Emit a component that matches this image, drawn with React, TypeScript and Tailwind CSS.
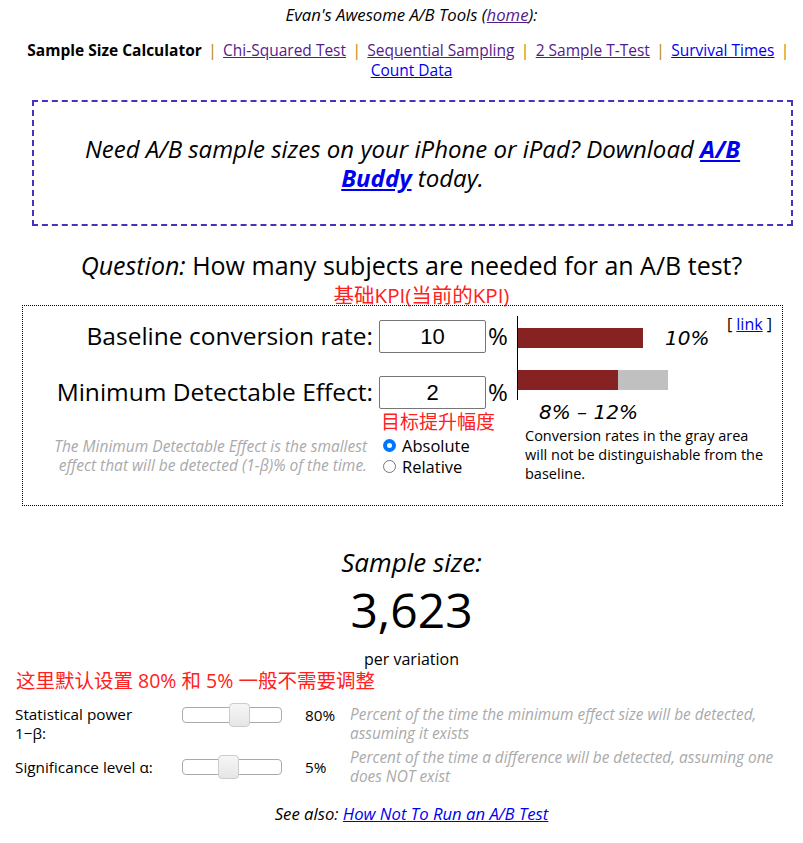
import React from "react";

const Sep = () => <span className="text-[#b8860b] mx-[6.4px]">|</span>;

function Slider({ thumb }: { thumb: number }) {
  return (
    <div className="relative w-[100px] h-[16px] rounded-[4px] border border-[#aaaaaa] bg-white">
      <div
        className="absolute top-[-5px] w-[21px] h-[24px] rounded-[4px] border border-[#cccccc] bg-gradient-to-b from-[#f6f6f6] to-[#e6e6e6]"
        style={{ left: thumb }}
      />
    </div>
  );
}

export default function App() {
  return (
    <div className="w-[803px] min-h-[843px] bg-white text-black font-['Open_Sans','Noto_Sans_CJK_SC',sans-serif]">
      <p className="pl-[20px] text-center italic text-[16.7px] pt-[5px] leading-[20px]">
        Evan's Awesome A/B Tools (<a href="#" className="underline text-[#551a8b]">home</a>):
      </p>
      <div className="pl-[20px] text-center text-[15.5px] leading-[20px] mt-[15px]">
        <div>
          <b>Sample Size Calculator</b>
          <Sep />
          <a href="#" className="underline text-[#551a8b]">Chi-Squared Test</a>
          <Sep />
          <a href="#" className="underline text-[#551a8b]">Sequential Sampling</a>
          <Sep />
          <a href="#" className="underline text-[#551a8b]">2 Sample T-Test</a>
          <Sep />
          <a href="#" className="underline text-[#0000ee]">Survival Times</a>
          <Sep />
        </div>
        <div>
          <a href="#" className="underline text-[#0000ee]">Count Data</a>
        </div>
      </div>

      <div className="ml-[32px] mt-[20px] w-[761px] h-[126px] border-2 border-dashed border-[#4a30c0] flex flex-col items-center justify-center px-[30px] italic text-[24px] leading-[29px]">
        <p className="text-center">
          Need A/B sample sizes on your iPhone or iPad? Download{" "}
          <a href="#" className="underline font-bold text-[#0000ee]">A/B</a>
        </p>
        <p className="text-center">
          <a href="#" className="underline font-bold text-[#0000ee]">Buddy</a> today.
        </p>
      </div>

      <p className="pl-[20px] text-center text-[25px] leading-[30px] mt-[24px]">
        <i>Question:</i> How many subjects are needed for an A/B test?
      </p>
      <p className="pl-[40px] text-center text-[20.5px] leading-[22px] text-[#ff2020] mt-[4px]">基础KPI(当前的KPI)</p>

      <div className="ml-[22px] -mt-[1px] w-[761px] h-[201px] border border-dotted border-black flex">
        <div className="w-[494px] pt-[14px] flex flex-col">
          <div className="flex items-center h-[32px]">
            <div className="w-[350px] text-right text-[24.5px] whitespace-nowrap">Baseline conversion rate:</div>
            <div className="ml-[6px] w-[107px] h-[33px] border border-[#767676] rounded-[2px] flex items-center justify-center text-[22px] font-['Liberation_Sans',sans-serif]">10</div>
            <span className="ml-[2px] text-[24px]">%</span>
          </div>
          <div className="flex items-center h-[32px] mt-[24px]">
            <div className="w-[350px] text-right text-[24.5px] whitespace-nowrap">Minimum Detectable Effect:</div>
            <div className="ml-[6px] w-[107px] h-[33px] border border-[#767676] rounded-[2px] flex items-center justify-center text-[22px] font-['Liberation_Sans',sans-serif]">2</div>
            <span className="ml-[2px] text-[24px]">%</span>
          </div>
          <div className="pl-[358px] text-[19px] leading-[22px] text-[#ff2020] mt-[3px]">目标提升幅度</div>
          <div className="flex mt-[2px]">
            <div className="w-[350px] pl-[26px] pr-[6px] pt-[2px] text-right italic text-[15.5px] leading-[19px] text-[#aaaaaa]">
              The Minimum Detectable Effect is the smallest effect that will be detected (1-β)% of the time.
            </div>
            <div className="ml-[10px] text-[16.5px] leading-[21px]">
              <label className="flex items-center gap-[6px]">
                <span className="w-[13px] h-[13px] rounded-full border-[4px] border-[#0075ff] bg-white inline-block" />
                Absolute
              </label>
              <label className="flex items-center gap-[6px]">
                <span className="w-[13px] h-[13px] rounded-full border border-[#767676] bg-white inline-block" />
                Relative
              </label>
            </div>
          </div>
        </div>
        <div className="flex-1 pt-[10px] flex flex-col">
          <div className="flex">
            <div className="w-[1px] h-[84px] bg-black" />
            <div className="flex flex-col pt-[12px]">
              <div className="flex items-center">
                <div className="w-[125px] h-[20px] bg-[#862222]" />
                <span className="ml-[22px] italic text-[20px] leading-[20px] font-['DejaVu_Sans',sans-serif]">10%</span>
              </div>
              <div className="flex mt-[22px]">
                <div className="w-[100px] h-[20px] bg-[#862222]" />
                <div className="w-[50px] h-[20px] bg-[#c0c0c0]" />
              </div>
            </div>
            <div className="ml-auto mr-[10px] text-[16px] leading-[20px] -mt-[2px]">
              [ <a href="#" className="underline text-[#0000ee]">link</a> ]
            </div>
          </div>
          <div className="pl-[22px] italic text-[20px] leading-[24px] font-['DejaVu_Sans',sans-serif]">8% – 12%</div>
          <div className="pl-[8px] text-[14.5px] leading-[19px] w-[252px] mt-[2px]">
            Conversion rates in the gray area will not be distinguishable from the baseline.
          </div>
        </div>
      </div>

      <div className="pl-[20px] text-center mt-[40px]">
        <p className="italic text-[26px] leading-[32px]">Sample size:</p>
        <p className="text-[48px] leading-[60px] mt-[2px]">3,623</p>
        <p className="text-[16px] leading-[22px] mt-[8px]">per variation</p>
      </div>
      <p className="pl-[16px] text-[19.5px] leading-[24px] text-[#ff2020] -mt-[1px]">这里默认设置 80% 和 5% 一般不需要调整</p>

      <div className="pl-[15px] mt-[12px] text-[15.3px] leading-[19px]">
        <div className="flex items-start">
          <div className="w-[167px]">Statistical power<br />1−β:</div>
          <div className="pt-[2px]"><Slider thumb={46} /></div>
          <div className="w-[45px] ml-[23px] pt-[1px]">80%</div>
          <div className="italic text-[15.4px] text-[#aaaaaa] w-[440px]">
            Percent of the time the minimum effect size will be detected, assuming it exists
          </div>
        </div>
        <div className="flex items-center mt-[5px]">
          <div className="w-[167px]">Significance level α:</div>
          <div><Slider thumb={35} /></div>
          <div className="w-[45px] ml-[23px]">5%</div>
          <div className="italic text-[15.4px] text-[#aaaaaa] w-[440px]">
            Percent of the time a difference will be detected, assuming one does NOT exist
          </div>
        </div>
      </div>

      <p className="pl-[20px] text-center italic text-[16.7px] leading-[20px] mt-[18px]">
        See also: <a href="#" className="underline text-[#0000ee]">How Not To Run an A/B Test</a>
      </p>
    </div>
  );
}
